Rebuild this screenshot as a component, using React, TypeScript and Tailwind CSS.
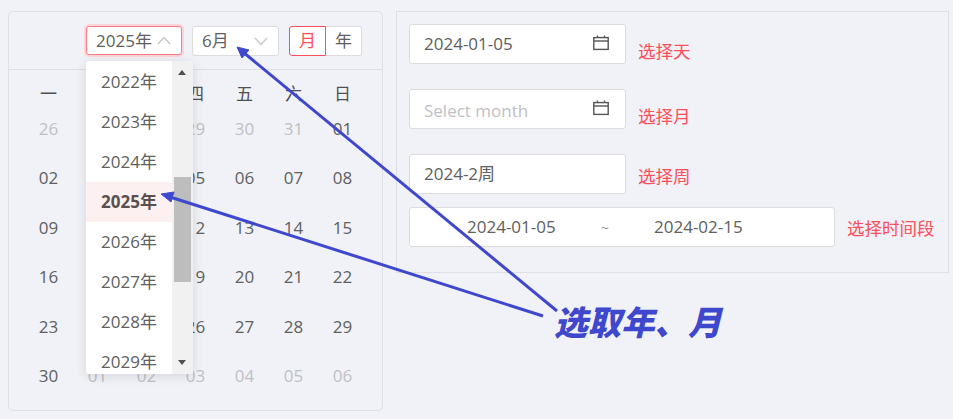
import React from "react";

const FONT = "font-['Open_Sans','Noto_Sans_CJK_SC',sans-serif]";

const weeks = [
  [["26", 1], ["", 1], ["", 1], ["29", 1], ["30", 1], ["31", 1], ["01", 0]],
  [["02", 0], ["", 0], ["", 0], ["05", 0], ["06", 0], ["07", 0], ["08", 0]],
  [["09", 0], ["", 0], ["", 0], ["12", 0], ["13", 0], ["14", 0], ["15", 0]],
  [["16", 0], ["", 0], ["", 0], ["19", 0], ["20", 0], ["21", 0], ["22", 0]],
  [["23", 0], ["", 0], ["", 0], ["26", 0], ["27", 0], ["28", 0], ["29", 0]],
  [["30", 0], ["01", 1], ["02", 1], ["03", 1], ["04", 1], ["05", 1], ["06", 1]],
] as [string, number][][];

const Chevron = ({ up }: { up?: boolean }) => (
  <svg width="14" height="9" viewBox="0 0 14 9" fill="none" stroke="#c4c4c4" strokeWidth="1.2">
    <path d={up ? "M1 8L7 1.5L13 8" : "M1 1L7 7.5L13 1"} />
  </svg>
);

const Cal = () => (
  <svg className="mt-[-2px]" width="16" height="16" viewBox="0 0 16 16" fill="none" stroke="#555" strokeWidth="1.4">
    <rect x="0.8" y="2.6" width="14.4" height="11.8" />
    <path d="M1 6H15" />
    <path d="M4.5 0.5V3M11.5 0.5V3" />
  </svg>
);

const Field = ({ children }: { children: React.ReactNode }) => (
  <div className="w-[217px] h-10 bg-white border border-[#dcdcdc] rounded-[3px] flex items-center pl-[14px] pr-[16px] justify-between shrink-0 text-[17px] text-[#606060]">
    {children}
  </div>
);

const Label = ({ children, pt }: { children: React.ReactNode; pt: string }) => (
  <span className={`text-[17.5px] leading-[26px] text-[#ff4d5a] whitespace-nowrap ${pt}`}>{children}</span>
);

export default function App() {
  return (
    <div className={`relative w-[953px] h-[419px] overflow-hidden bg-[#f0f2f7] ${FONT} flex items-start pl-2 pt-[11px] gap-[13px]`}>
      {/* calendar card */}
      <div className="w-[375px] h-[400px] border border-[#dcdfe4] rounded-[5px] shrink-0">
        <div className="h-[58px] border-b border-[#dcdfe4] flex items-start justify-end pt-[14px] pr-5 text-[17px] text-[#606060]">
          <div className="w-[96px] h-[29px] bg-white border border-[#ff7b84] rounded-[3px] shadow-[0_0_0_2px_#fbd5d9] flex items-center pl-[9px] gap-[5px] whitespace-nowrap">
            <span>2025年</span>
            <Chevron up />
          </div>
          <div className="ml-[10px] w-[87px] h-[30px] bg-white border border-[#dcdcdc] rounded-[3px] flex items-center justify-between pl-[9px] pr-[10px]">
            <span>6月</span>
            <Chevron />
          </div>
          <div className="ml-[10px] w-[37px] h-[30px] bg-white border border-[#ff4d5a] rounded-l-[3px] flex items-center justify-center text-[#ff4d5a]">月</div>
          <div className="w-[36px] h-[30px] bg-white border border-l-0 border-[#dcdcdc] rounded-r-[3px] flex items-center justify-center">年</div>
        </div>
        <div className="px-[15px] pt-[11px]">
          <div className="grid grid-cols-7 h-[24px] items-center text-center text-[17px] text-[#505050]">
            {["一", "", "", "四", "五", "六", "日"].map((d, i) => (
              <span key={i}>{d}</span>
            ))}
          </div>
          <div className="grid grid-cols-7 auto-rows-[49.4px] items-center text-center text-[17px] mt-[-1px]">
            {weeks.flat().map(([d, off], i) => (
              <span key={i} className={off ? "text-[#c0c0c4]" : "text-[#606060]"}>{d}</span>
            ))}
          </div>
        </div>
      </div>

      {/* form card */}
      <div className="w-[553px] h-[262px] border border-[#dcdfe4] pl-3 pt-3 flex flex-col shrink-0">
        <div className="flex gap-3 h-10">
          <Field><span>2024-01-05</span><Cal /></Field>
          <Label pt="pt-[14px]">选择天</Label>
        </div>
        <div className="flex gap-3 h-10 mt-[25px]">
          <Field><span className="text-[#c0c0c4] pt-[3px]">Select month</span><Cal /></Field>
          <Label pt="pt-[14px]">选择月</Label>
        </div>
        <div className="flex gap-3 h-10 mt-[25px]">
          <Field><span>2024-2周</span></Field>
          <Label pt="pt-[9px]">选择周</Label>
        </div>
        <div className="flex gap-3 h-10 mt-[13px]">
          <div className="w-[426px] h-10 bg-white border border-[#dcdcdc] rounded-[3px] flex items-center text-[17px] text-[#606060] pl-[57px] whitespace-nowrap shrink-0">
            <span className="w-[89px]">2024-01-05</span>
            <span className="w-[98px] text-center text-[#909090] text-[14px]">~</span>
            <span>2024-02-15</span>
          </div>
          <Label pt="pt-[8px]">选择时间段</Label>
        </div>
      </div>

      {/* dropdown */}
      <div className="absolute left-[86px] top-[61px] w-[107px] h-[313px] bg-white rounded-[3px] shadow-[0_2px_12px_rgba(0,0,0,0.12)] overflow-hidden flex text-[17px] text-[#606060]">
        <div className="w-[86px] flex flex-col pt-[1px]">
          {["2022年", "2023年", "2024年", "2025年", "2026年", "2027年", "2028年", "2029年"].map((y) => (
            <div
              key={y}
              className={`h-10 shrink-0 flex items-center pl-[15px] whitespace-nowrap ${y === "2025年" ? "bg-[#fdf0f0] font-bold text-[#5a5050]" : ""}`}
            >
              {y}
            </div>
          ))}
        </div>
        <div className="w-[21px] bg-[#f1f1f1] relative">
          <div className="absolute left-[6px] top-[9px] w-0 h-0 border-x-[4.5px] border-x-transparent border-b-[5px] border-b-[#505050]" />
          <div className="absolute left-[2px] top-[116px] w-[17px] h-[105px] bg-[#bdbdbd]" />
          <div className="absolute left-[6px] bottom-[9px] w-0 h-0 border-x-[4.5px] border-x-transparent border-t-[5px] border-t-[#505050]" />
        </div>
      </div>

      {/* annotation arrows */}
      <svg className="absolute left-0 top-0" width="953" height="419" viewBox="0 0 953 419" fill="none">
        <path d="M557 311L243 52" stroke="#3f48cc" strokeWidth="3" />
        <path d="M237 47L249 50L242 58Z" fill="#3f48cc" stroke="#3f48cc" />
        <path d="M543 316L170 197" stroke="#3f48cc" strokeWidth="3" />
        <path d="M161 194L174 192L171 202Z" fill="#3f48cc" stroke="#3f48cc" />
      </svg>
      <div className="absolute left-[554px] top-[300px] text-[33.5px] leading-[44px] font-black italic text-[#3f48cc] whitespace-nowrap">选取年、月</div>
    </div>
  );
}
